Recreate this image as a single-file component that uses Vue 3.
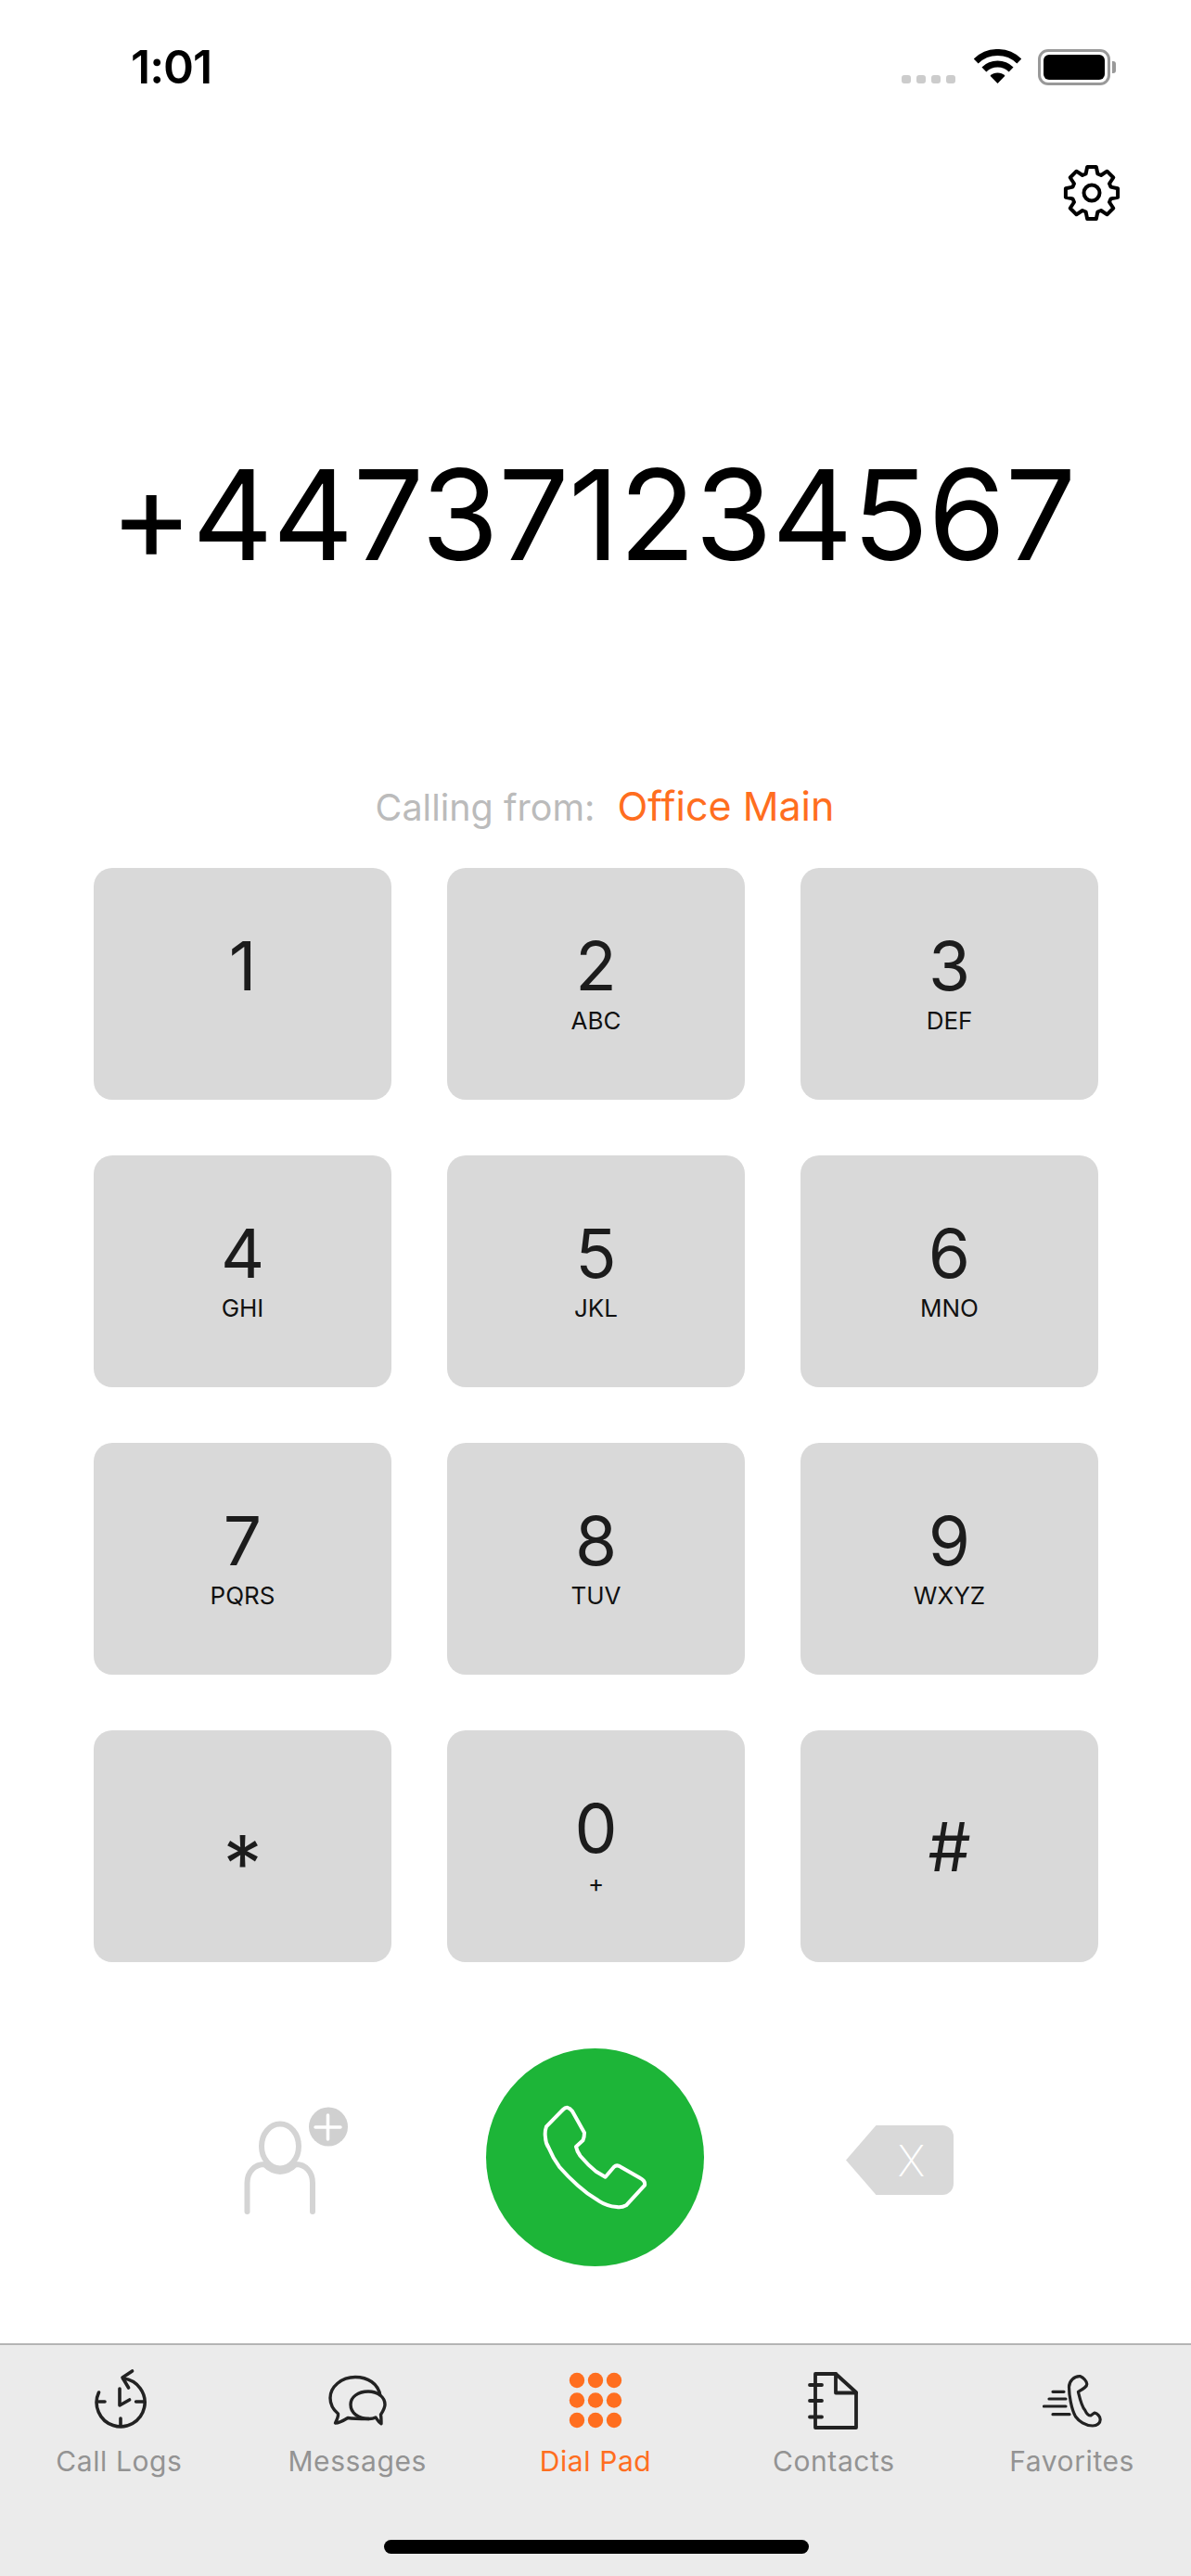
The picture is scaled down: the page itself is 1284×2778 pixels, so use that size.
<template>
  <div class="phone">
    <header class="status">
      <span class="status__time">1:01</span>
      <div class="status__icons">
        <div class="signal"><i v-for="n in 4" :key="n" /></div>
        <svg class="wifi" width="51" height="37" viewBox="0 0 51 37" fill="none" stroke="#000" stroke-width="7">
          <path d="M2.2 12.9A33.5 33.5 0 0 1 48.8 12.9" />
          <path d="M10.9 21.9A21 21 0 0 1 40.1 21.9" />
          <path d="M17.5 28.7A11.5 11.5 0 0 1 33.5 28.7L25.5 37Z" fill="#000" stroke="none" />
        </svg>
        <div class="battery"><div class="battery__fill" /></div>
      </div>
    </header>

    <div class="settings">
      <svg width="62" height="62" viewBox="0 0 62 62" fill="none" stroke="#000" stroke-width="4" stroke-linejoin="round">
        <path :d="gearPath" />
        <circle cx="31" cy="31" r="8.5" />
      </svg>
    </div>

    <h1 class="number">+447371234567</h1>

    <p class="from"><span class="from__label">Calling from:</span><span class="from__name">Office Main</span></p>

    <section class="keys">
      <button v-for="k in keys" :key="k.d" type="button" class="key" :class="k.cls">
        <span class="key__digit">{{ k.d }}</span>
        <span class="key__sub">{{ k.s }}</span>
      </button>
    </section>

    <section class="actions">
      <svg class="add" width="112" height="116" viewBox="0 0 112 116" fill="none">
        <ellipse cx="39" cy="42.5" rx="20" ry="24" stroke="#d4d4d4" stroke-width="6" />
        <path d="M3.5 113V82C3.5 70 12 62 22 62C26 66 32 70 39 70C46 70 52 66 56 62C66 62 74 70 74 82V113" stroke="#d4d4d4" stroke-width="6" stroke-linecap="round" />
        <circle cx="91" cy="21.5" r="21" fill="#d0d0d0" />
        <path d="M77 22H104M90.5 9V35" stroke="#fff" stroke-width="3.5" stroke-linecap="round" />
      </svg>
      <button type="button" class="call" aria-label="Call">
        <svg width="235" height="235" viewBox="0 0 235 235" fill="none" stroke="#fff" stroke-width="4" stroke-linejoin="round">
          <path d="M83 66Q88 61 93 67.7L106 91Q106 96 104.4 99.3L97 106Q98 111 101.6 116Q110 126 118.5 132.7L128.6 138.7L138 127.7Q141 125 145 127.7L166.4 140Q172 143 171 147.7L151 169.3Q146 172 141 171Q130 170 121.3 164.3Q109 157 98.8 147.7Q88 138 79 127.7Q72 118 67.8 107.7Q64 102 64 96Q63 90 65 84.3Z" />
        </svg>
      </button>
      <div class="back"><span>X</span></div>
    </section>

    <nav class="tabs">
      <div class="tab">
        <svg width="64" height="68" viewBox="0 0 64 68" fill="none" stroke="#222" stroke-width="3.6" stroke-linecap="round" stroke-linejoin="round">
          <path d="M10.5 27A26 26 0 1 0 37 12" />
          <path d="M46.6 4L36 11L42.6 22" />
          <path d="M33 23V41L43.6 35" />
          <path d="M10.6 37H17M50.6 37H58.6M34 55V63" />
        </svg>
        <span>Call Logs</span>
      </div>
      <div class="tab">
        <svg width="64" height="68" viewBox="0 0 64 68" fill="none" stroke="#222" stroke-width="3.4" stroke-linejoin="round">
          <path d="M57 31C55 17 43 10.5 30 10.5C15 10.5 3 21 3 33C3 40 6 45.5 11.5 50C12 53 10 57 8.5 60C13 60 18 57 22 54.5C28 55.5 38 55.5 45 55.5" />
          <path d="M45 55.5C48 55.5 50 55 52 54C54 57 55 59 58 60.7C58 57 58 54 57.5 51C60 47 62 44 62 40C62 32 54 26 44 26C33 26 25 32 25 40C25 49 33 55.5 45 55.5Z" />
        </svg>
        <span>Messages</span>
      </div>
      <div class="tab tab--on">
        <svg width="64" height="68" viewBox="0 0 64 68" fill="#ff6e1f">
          <template v-for="y in [14, 35.5, 57]" :key="y">
            <circle v-for="x in [12, 32, 52]" :key="x" :cx="x" :cy="y" r="8.2" />
          </template>
        </svg>
        <span>Dial Pad</span>
      </div>
      <div class="tab">
        <svg width="64" height="68" viewBox="0 0 64 68" fill="none" stroke="#222" stroke-width="3.8" stroke-linecap="round" stroke-linejoin="round">
          <path d="M12 7H34L56 27V65H12Z" />
          <path d="M34 7V27.5H56" />
          <path d="M6 19H19M6 36H19M6 53.5H19" />
        </svg>
        <span>Contacts</span>
      </div>
      <div class="tab">
        <svg width="64" height="68" viewBox="0 0 64 68" fill="none" stroke="#222" stroke-width="3.2" stroke-linecap="round" stroke-linejoin="round">
          <path d="M40.8 9.7C44 11 47.8 15 47.8 18C47.8 21 44 23 38.4 26.3C40 33 42 42 45.8 46.3C47 49 49 52 51.9 52L56 49C59 49.7 62.2 53 62.2 56.3C62.2 60 59 63 54 63C46 63 39 58 35.5 53C31 45 28.5 30 28.5 21.3C28.5 15 34 9 40.8 9.7Z" />
          <path d="M11 26.3H23M7 34H25M1.5 42H25M11 50.7H29" />
        </svg>
        <span>Favorites</span>
      </div>
    </nav>
    <div class="home" />
  </div>
</template>

<script setup>
const keys = [
  { d: '1', s: '' },
  { d: '2', s: 'ABC' },
  { d: '3', s: 'DEF' },
  { d: '4', s: 'GHI' },
  { d: '5', s: 'JKL' },
  { d: '6', s: 'MNO' },
  { d: '7', s: 'PQRS' },
  { d: '8', s: 'TUV' },
  { d: '9', s: 'WXYZ' },
  { d: '*', s: '', cls: 'key--star' },
  { d: '0', s: '+' },
  { d: '#', s: '', cls: 'key--hash' },
]

// eight flat teeth around the settings wheel
function buildGear() {
  const pts = []
  for (let i = 0; i < 8; i++) {
    const a = (i * Math.PI) / 4 - Math.PI / 2
    for (const [r, o] of [[21.5, -0.3], [28.5, -0.17], [28.5, 0.17], [21.5, 0.3]]) {
      pts.push(`${(31 + r * Math.cos(a + o)).toFixed(1)} ${(31 + r * Math.sin(a + o)).toFixed(1)}`)
    }
  }
  return `M${pts.join('L')}Z`
}
const gearPath = buildGear()
</script>

<style scoped>
.phone {
  width: 1284px;
  height: 2778px;
  display: flex;
  flex-direction: column;
  background: #fff;
  font-family: Inter, "Liberation Sans", sans-serif;
  overflow: hidden;
}

.status {
  height: 92px;
  padding: 46px 87px 0 141px;
  box-sizing: border-box;
  display: flex;
  justify-content: space-between;
  align-items: flex-start;
}

.status__time {
  font-size: 50px;
  line-height: 52px;
  font-weight: 600;
  letter-spacing: -1px;
  color: #000;
}

.status__icons {
  display: flex;
  align-items: flex-end;
  margin-top: 7px;
}

.signal {
  display: flex;
  gap: 6px;
  margin-right: 20px;
  padding-bottom: 2px;
}

.signal i {
  width: 10px;
  height: 9px;
  border-radius: 3px;
  background: #ccc;
}

.wifi {
  margin-right: 18px;
  margin-bottom: 2px;
}

.battery {
  position: relative;
  width: 78px;
  height: 39px;
  box-sizing: border-box;
  border: 3px solid #999;
  border-radius: 11px;
  padding: 3px;
}

.battery::after {
  content: "";
  position: absolute;
  right: -9px;
  top: 10px;
  width: 4px;
  height: 13px;
  background: #999;
  border-radius: 0 3px 3px 0;
}

.battery__fill {
  height: 100%;
  background: #000;
  border-radius: 6px;
}

.settings {
  display: flex;
  justify-content: flex-end;
  padding: 85px 76px 0 0;
  height: 62px;
}

.number {
  margin: 228px 0 0;
  padding-right: 6px;
  text-align: center;
  font-size: 135px;
  line-height: 176px;
  font-weight: 400;
  letter-spacing: -0.5px;
  color: #000;
  white-space: nowrap;
}

.from {
  margin: 200px 0 0;
  padding-left: 20px;
  display: flex;
  justify-content: center;
  align-items: baseline;
  gap: 24px;
  line-height: 52px;
}

.from__label {
  font-size: 39.5px;
  color: #bbb;
}

.from__name {
  font-size: 43px;
  color: #ff6e1f;
}

.keys {
  margin: 39px 0 0 101px;
  display: grid;
  grid-template-columns: repeat(3, 321px);
  grid-auto-rows: 250px;
  gap: 60px;
}

.key {
  border: 0;
  padding: 68px 0 0;
  background: #d9d9d9;
  border-radius: 20px;
  display: flex;
  flex-direction: column;
  align-items: center;
  font-family: inherit;
  color: #1c1c1c;
}

.key__digit {
  font-size: 73px;
  line-height: 76px;
}

.key__sub {
  margin-top: 6px;
  font-size: 26px;
  line-height: 30px;
  color: #111;
}

.key--star .key__digit {
  font-size: 84px;
  line-height: 84px;
  margin-top: 34px;
}

.key--hash .key__digit {
  margin-top: 20px;
}

.actions {
  margin-top: 93px;
  display: flex;
  justify-content: flex-start;
  align-items: center;
  padding-left: 263px;
}

.add {
  margin-right: 149px;
  margin-top: 6px;
}

.call {
  width: 235px;
  height: 235px;
  border: 0;
  padding: 0;
  border-radius: 50%;
  background: #1db538;
  margin-right: 153px;
}

.call svg {
  display: block;
}

.back {
  width: 116px;
  height: 75px;
  margin-top: 6px;
  box-sizing: border-box;
  padding-left: 25px;
  display: flex;
  align-items: center;
  justify-content: center;
  background: #d9d9d9;
  border-radius: 0 12px 12px 0;
  clip-path: polygon(28% 0, 100% 0, 100% 100%, 28% 100%, 0 50%);
  color: #fff;
  font-size: 46px;
  font-weight: 200;
}

.tabs {
  margin-top: 83px;
  flex: 1;
  position: relative;
  display: grid;
  grid-template-columns: repeat(5, 1fr);
  background: #ebebeb;
  border-top: 2px solid #b5b5b5;
  align-items: start;
  padding-top: 24px;
}

.tab {
  display: flex;
  flex-direction: column;
  align-items: center;
  font-size: 30px;
  line-height: 36px;
  color: #939393;
  letter-spacing: 0.6px;
}

.tab svg {
  display: block;
  margin-bottom: 15px;
}

.tab--on {
  color: #ff6e1f;
}

.home {
  position: absolute;
  left: 414px;
  top: 2739px;
  width: 458px;
  height: 15px;
  border-radius: 8px;
  background: #000;
}
</style>

<style>
body {
  background: #fff;
}
</style>
